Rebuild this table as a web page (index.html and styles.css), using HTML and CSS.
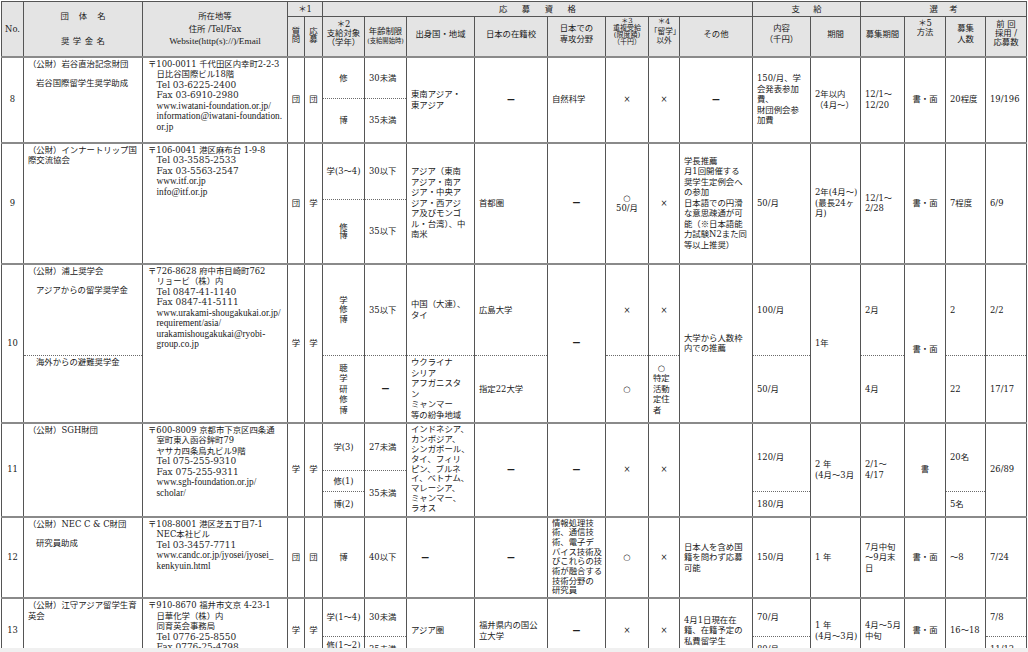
FILE: index.html
```html
<!DOCTYPE html>
<html lang="ja">
<head>
<meta charset="utf-8">
<title>奨学金一覧</title>
<link rel="stylesheet" href="styles.css">
</head>
<body>
<div class="sheet">
<table class="grid">
<colgroup>
<col class="c-no"><col class="c-org"><col class="c-addr"><col class="c-q"><col class="c-a"><col class="c-tg"><col class="c-age"><col class="c-ctry"><col class="c-sch"><col class="c-maj"><col class="c-dup"><col class="c-ryu"><col class="c-oth"><col class="c-amt"><col class="c-per"><col class="c-rec"><col class="c-met"><col class="c-num"><col class="c-prev">
</colgroup>
<thead>
<tr class="hr1">
<th rowspan="2" class="h-no">No.</th>
<th rowspan="2" class="h-org"><div class="sp-a">団体名</div><div class="sp-b">奨学金名</div></th>
<th rowspan="2" class="h-addr">所在地等<br>住所 /Tel/Fax<br><span class="hu">Website(http(s)://)/Email</span></th>
<th colspan="2">＊1</th>
<th colspan="8"><span class="sp-c">応募資格</span></th>
<th colspan="2"><span class="sp-d">支給</span></th>
<th colspan="4"><span class="sp-e">選考</span></th>
</tr>
<tr class="hr2">
<th class="h-qa">質<br>問</th>
<th class="h-qa">応<br>募</th>
<th class="h-3l">＊2<br>支給対象<br>（学年）</th>
<th class="h-age">年齢制限<br><span class="tiny">(支給開始時)</span></th>
<th>出身国・地域</th>
<th>日本の在籍校</th>
<th>日本での<br>専攻分野</th>
<th class="h-dup">＊3<br>重複受給<br>(限度額)<br>（千円）</th>
<th class="h-ryu">＊4<br>「留学」<br>以外</th>
<th>その他</th>
<th>内容<br>（千円）</th>
<th>期間</th>
<th>募集期間</th>
<th class="h-met">＊5<br>方法</th>
<th>募集<br>人数</th>
<th class="h-3l">前 回<br>採用 /<br>応募数</th>
</tr>
</thead>
<tbody>
<tr class="rec r8a">
<td rowspan="2" class="no">8</td>
<td rowspan="2" class="org"><div>（公財）岩谷直治記念財団</div><div class="sch">岩谷国際留学生奨学助成</div></td>
<td rowspan="2" class="addr"><div>〒100-0011 千代田区内幸町2-2-3</div><div class="in">日比谷国際ビル18階</div><div class="in t">Tel 03-6225-2400</div><div class="in t">Fax 03-6910-2980</div><div class="in u">www.iwatani-foundation.or.jp/</div><div class="in u">information@iwatani-foundation.</div><div class="in u">or.jp</div></td>
<td rowspan="2" class="c n0">団</td>
<td rowspan="2" class="c n0">団</td>
<td class="c tg">修</td>
<td>30未満</td>
<td rowspan="2">東南アジア・<br>東アジア</td>
<td rowspan="2" class="c"><span class="dash">ー</span></td>
<td rowspan="2">自然科学</td>
<td rowspan="2" class="c">×</td>
<td rowspan="2" class="c">×</td>
<td rowspan="2" class="c"><span class="dash">ー</span></td>
<td rowspan="2">150/月、学<br>会発表参加<br>費、<br>財団例会参<br>加費</td>
<td rowspan="2">2年以内<br>（4月～）</td>
<td rowspan="2">12/1～<br>12/20</td>
<td rowspan="2" class="c">書・面</td>
<td rowspan="2">20程度</td>
<td rowspan="2">19/196</td>
</tr>
<tr class="r8b">
<td class="c tg d">博</td>
<td class="d">35未満</td>
</tr>

<tr class="rec r9a">
<td rowspan="2" class="no">9</td>
<td rowspan="2" class="org"><div>（公財）インナートリップ国</div><div>際交流協会</div></td>
<td rowspan="2" class="addr"><div>〒106-0041 港区麻布台 1-9-8</div><div class="in t">Tel 03-3585-2533</div><div class="in t">Fax 03-5563-2547</div><div class="in u">www.itf.or.jp</div><div class="in u">info@itf.or.jp</div></td>
<td rowspan="2" class="c n0">団</td>
<td rowspan="2" class="c n0">学</td>
<td class="c tg">学(3～4)</td>
<td>30以下</td>
<td rowspan="2">アジア（東南<br>アジア・南ア<br>ジア・中央ア<br>ジア・西アジ<br>ア及びモンゴ<br>ル・台湾）、中<br>南米</td>
<td rowspan="2">首都圏</td>
<td rowspan="2" class="c"><span class="dash">ー</span></td>
<td rowspan="2" class="c">○<br>50/月</td>
<td rowspan="2" class="c">×</td>
<td rowspan="2">学長推薦<br>月1回開催する<br>奨学生定例会へ<br>の参加<br>日本語での円滑<br>な意思疎通が可<br>能（※日本語能<br>力試験N2また同<br>等以上推奨）</td>
<td rowspan="2">50/月</td>
<td rowspan="2">2年(4月～)<br>(最長24ヶ<br>月)</td>
<td rowspan="2">12/1～<br>2/28</td>
<td rowspan="2" class="c">書・面</td>
<td rowspan="2">7程度</td>
<td rowspan="2">6/9</td>
</tr>
<tr class="r9b">
<td class="c tg d lh9">修<br>博</td>
<td class="d">35以下</td>
</tr>

<tr class="rec r10a">
<td rowspan="2" class="no">10</td>
<td class="org"><div>（公財）浦上奨学会</div><div class="sch">アジアからの留学奨学金</div></td>
<td rowspan="2" class="addr"><div>〒726-8628 府中市目崎町762</div><div class="in">リョービ（株）内</div><div class="in t">Tel 0847-41-1140</div><div class="in t">Fax 0847-41-5111</div><div class="in u">www.urakami-shougakukai.or.jp/</div><div class="in u">requirement/asia/</div><div class="in u">urakamishougakukai@ryobi-</div><div class="in u">group.co.jp</div></td>
<td rowspan="2" class="c n0">学</td>
<td rowspan="2" class="c n0">学</td>
<td class="c tg lh95">学<br>修<br>博</td>
<td>35以下</td>
<td>中国（大連）、<br>タイ</td>
<td>広島大学</td>
<td rowspan="2" class="c"><span class="dash">ー</span></td>
<td class="c">×</td>
<td class="c">×</td>
<td rowspan="2">大学から人数枠<br>内での推薦</td>
<td>100/月</td>
<td rowspan="2">1年</td>
<td>2月</td>
<td rowspan="2" class="c met10">書・面</td>
<td>2</td>
<td>2/2</td>
</tr>
<tr class="r10b">
<td class="org d"><div class="sch0">海外からの避難奨学金</div></td>
<td class="c tg d">聴<br>学<br>研<br>修<br>博</td>
<td class="c d"><span class="dash">ー</span></td>
<td class="d">ウクライナ<br>シリア<br>アフガニスタ<br>ン<br>ミャンマー<br>等の紛争地域</td>
<td class="d">指定22大学</td>
<td class="c d">○</td>
<td class="d ryu"><div class="tok">○</div>特定<br>活動<br>定住<br>者</td>
<td class="d">50/月</td>
<td class="d">4月</td>
<td class="d">22</td>
<td class="d">17/17</td>
</tr>

<tr class="rec r11a">
<td rowspan="3" class="no">11</td>
<td rowspan="3" class="org"><div>（公財）SGH財団</div></td>
<td rowspan="3" class="addr"><div>〒600-8009 京都市下京区四条通</div><div class="in">室町東入函谷鉾町79</div><div class="in">ヤサカ四条烏丸ビル9階</div><div class="in t">Tel 075-255-9310</div><div class="in t">Fax 075-255-9311</div><div class="in u">www.sgh-foundation.or.jp/</div><div class="in u">scholar/</div></td>
<td rowspan="3" class="c n0">学</td>
<td rowspan="3" class="c n0">学</td>
<td class="c tg">学(3)</td>
<td>27未満</td>
<td rowspan="3" class="lh99">インドネシア、<br>カンボジア、<br>シンガポール、<br>タイ、フィリ<br>ピン、ブルネ<br>イ、ベトナム、<br>マレーシア、<br>ミャンマー、<br>ラオス</td>
<td rowspan="3" class="c"><span class="dash">ー</span></td>
<td rowspan="3" class="c"><span class="dash">ー</span></td>
<td rowspan="3" class="c">×</td>
<td rowspan="3" class="c">×</td>
<td rowspan="3"></td>
<td rowspan="2">120/月</td>
<td rowspan="3">2 年<br>(4月～3月</td>
<td rowspan="3">2/1～<br>4/17</td>
<td rowspan="3" class="c">書</td>
<td rowspan="2">20名</td>
<td rowspan="3">26/89</td>
</tr>
<tr class="r11b">
<td class="c tg d">修(1)</td>
<td rowspan="2" class="d">35未満</td>
</tr>
<tr class="r11c">
<td class="c tg d">博(2)</td>
<td class="d">180/月</td>
<td class="d">5名</td>
</tr>

<tr class="rec r12">
<td class="no">12</td>
<td class="org"><div>（公財）NEC C &amp; C財団</div><div class="sch">研究員助成</div></td>
<td class="addr"><div>〒108-8001 港区芝五丁目7-1</div><div class="in">NEC本社ビル</div><div class="in t">Tel 03-3457-7711</div><div class="in u">www.candc.or.jp/jyosei/jyosei_</div><div class="in u">kenkyuin.html</div></td>
<td class="c n0">団</td>
<td class="c n0">団</td>
<td class="c tg">博</td>
<td>40以下</td>
<td class="dl"><span class="dash">ー</span></td>
<td class="c"><span class="dash">ー</span></td>
<td class="lh97">情報処理技<br>術、通信技<br>術、電子デ<br>バイス技術及<br>びこれらの技<br>術が融合する<br>技術分野の<br>研究員</td>
<td class="c">○</td>
<td class="c">×</td>
<td>日本人を含め国<br>籍を問わず応募<br>可能</td>
<td>150/月</td>
<td>1 年</td>
<td>7月中旬<br>～9月末<br>日</td>
<td class="c">書・面</td>
<td>～8</td>
<td>7/24</td>
</tr>

<tr class="rec r13a">
<td rowspan="2" class="no">13</td>
<td rowspan="2" class="org"><div>（公財）江守アジア留学生育</div><div>英会</div></td>
<td rowspan="2" class="addr"><div>〒910-8670 福井市文京 4-23-1</div><div class="in">日華化学（株）内</div><div class="in">同育英会事務局</div><div class="in t">Tel 0776-25-8550</div><div class="in t">Fax 0776-25-4798</div></td>
<td rowspan="2" class="c n0">学</td>
<td rowspan="2" class="c n0">学</td>
<td class="c tg">学(1～4)</td>
<td>30未満</td>
<td rowspan="2">アジア圏</td>
<td rowspan="2">福井県内の国公<br>立大学</td>
<td rowspan="2" class="c"><span class="dash">ー</span></td>
<td rowspan="2" class="c">×</td>
<td rowspan="2" class="c">×</td>
<td rowspan="2">4月1日現在在<br>籍、在籍予定の<br>私費留学生</td>
<td>70/月</td>
<td rowspan="2">1 年<br>(4月～3月)</td>
<td rowspan="2">4月～5月<br>中旬</td>
<td rowspan="2" class="c">書・面</td>
<td rowspan="2">16～18</td>
<td>7/8</td>
</tr>
<tr class="r13b">
<td class="c tg d lh8">修(1～2)<br>博(1～4)</td>
<td class="d">35未満</td>
<td class="d">80/月</td>
<td class="d">11/12</td>
</tr>
</tbody>
</table>
</div>
<div class="hbar"></div>
</body>
</html>
```

FILE: styles.css
```css
html, body {
  margin: 0;
  padding: 0;
  overflow: hidden;
  background: #ffffff;
}
body {
  font-family: "DejaVu Serif", "Noto Sans CJK JP", serif;
  font-size: 8.4px;
  line-height: 10.5px;
  color: #202020;
}
.sheet {
  padding: 1px 0 0 1px;
}
.grid {
  border-collapse: collapse;
  table-layout: fixed;
  width: 1025px;
  border-top: 1px solid #555;
}
.grid th,
.grid td {
  padding: 1px 4px;
  border-left: 1px solid #555;
  border-right: 1px solid #555;
  white-space: nowrap;
  overflow: hidden;
  vertical-align: middle;
  font-weight: normal;
  text-align: left;
}
.grid th {
  background: #e4e4e4;
  border: 1px solid #555;
  text-align: center;
  padding: 0 1px;
}

/* column widths */
.c-no { width: 22px; }
.c-org { width: 119px; }
.c-addr { width: 145px; }
.c-q { width: 17px; }
.c-a { width: 18px; }
.c-tg { width: 42px; }
.c-age { width: 42px; }
.c-ctry { width: 68px; }
.c-sch { width: 73px; }
.c-maj { width: 58px; }
.c-dup { width: 43px; }
.c-ryu { width: 31px; }
.c-oth { width: 73px; }
.c-amt { width: 58px; }
.c-per { width: 50px; }
.c-rec { width: 44px; }
.c-met { width: 41px; }
.c-num { width: 40px; }
.c-prev { width: 41px; }

/* header */
.hr1 { height: 15px; }
.hr2 { height: 36px; }
.hr2 th { padding-bottom: 5px; }
.sp-a { letter-spacing: 10px; padding-left: 10px; }
.sp-b { letter-spacing: 3.5px; padding-left: 3.5px; margin-top: 14px; }
.sp-c { letter-spacing: 14.5px; padding-left: 14.5px; }
.sp-d { letter-spacing: 13.5px; padding-left: 13.5px; }
.sp-e { letter-spacing: 11.5px; padding-left: 11.5px; }
.h-addr { line-height: 12.5px; }
.hu { font-family: "Liberation Serif", "Noto Sans CJK JP", serif; font-size: 9.2px; }
.hr2 .h-qa { line-height: 8.5px; padding-bottom: 2px; }
.hr2 .h-3l { line-height: 9px; }
.hr2 .h-age { padding-bottom: 1px; line-height: 9px; }
.tiny { font-size: 6.3px; }
.hr2 .h-dup { font-size: 7px; line-height: 7px; padding-bottom: 9px; }
.hr2 .h-ryu { font-size: 7.6px; line-height: 9.5px; padding-bottom: 10px; }
.hr2 .h-met { line-height: 8.5px; padding-bottom: 17px; }

/* records */
.rec td { border-top: 2px solid #8a8a8a; }
.grid td.d { border-top: 1px dotted #6a6a6a; }
.r8a { height: 42px; }
.r8b { height: 44px; }
.r9a { height: 57px; }
.r9b { height: 64px; }
.r10a { height: 92px; }
.r10b { height: 67px; }
.r11a { height: 48px; }
.r11b { height: 21px; }
.r11c { height: 25px; }
.r12 { height: 80px; }
.r13a { height: 38px; }
.r13b { height: 26px; }

.grid td.no { text-align: center; padding: 0; }
.grid td.c { text-align: center; }
.grid td.n0 { padding: 0; }
.grid td.tg { padding-left: 1px; padding-right: 1px; }
.grid td.org,
.grid td.addr { vertical-align: top; padding-top: 1px; }
.grid td.org { padding-left: 4px; }
.sch { padding-left: 8px; margin-top: 9px; }
.sch0 { padding-left: 8px; }
.grid td.addr { padding-left: 5px; }
.in { padding-left: 8.5px; }
.t { font-size: 9px; color: #2a2a2a; }
.u { font-family: "Liberation Serif", "Noto Sans CJK JP", serif; font-size: 9.3px; }
.dash { font-family: "Noto Sans CJK JP", sans-serif; font-weight: 700; }
.lh9 { line-height: 8.5px; }
.lh95 { line-height: 9.5px; }
.lh99 { line-height: 9.9px; }
.lh97 { line-height: 9.7px; }
.lh8 { line-height: 8px; }
.grid td.dl { padding-left: 14px; }
.grid td.met10 { padding-top: 14px; }
.tok { width: 17px; text-align: center; }

.hbar {
  position: fixed;
  left: 0;
  right: 0;
  bottom: 0;
  height: 4px;
  background: #f0f0f0;
}
```
